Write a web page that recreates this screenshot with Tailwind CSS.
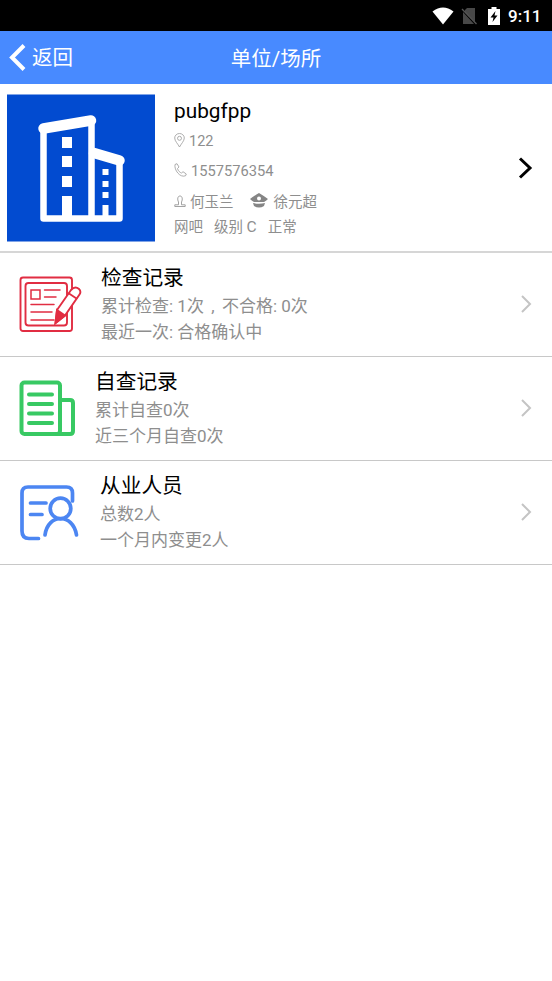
<!DOCTYPE html>
<html lang="zh-CN">
<head>
<meta charset="utf-8">
<title>单位/场所</title>
<script src="https://cdn.jsdelivr.net/npm/@tailwindcss/browser@4"></script>
</head>
<body class="w-[552px] h-[981px] bg-white overflow-hidden font-[Roboto,'Noto_Sans_CJK_SC',sans-serif] text-[#8e8e8e] whitespace-nowrap">
<div class="h-[31px] bg-black flex items-center justify-end pr-[10px] text-white">
  <svg class="w-[22px] h-[18px] mr-[7px]" viewBox="0 0 22 18"><path d="M.5 4.500Q11-3.500 21.500 4.500L11 17.500Z" fill="#fff"/></svg>
  <svg class="w-[17px] h-[18px] mr-[10px]" viewBox="0 0 17 18"><path d="M6 1H14V15L4 5V3ZM2 5L13 17H2Z" fill="#484848"/><path d="M1 2L15.500 17" stroke="#555" stroke-width="1.300"/></svg>
  <svg class="w-[12px] h-[18px] mr-[8px]" viewBox="0 0 12 18"><path d="M0 2H3.500V0H8.500V2H12V18H0Z" fill="#fff"/><path d="M7.500 4L2.500 10.500H5.500L4.500 15L9.500 8.500H6.500Z" fill="#000"/></svg>
  <span class="text-[17px] leading-[30px] pt-px font-medium w-[34px]">9:11</span>
</div>
<header class="h-[53px] bg-[#488aff] text-white text-[20.5px] leading-[53px] grid grid-cols-3">
  <div class="flex items-center pl-[9px]">
    <svg class="w-[17px] h-[27px] mr-[6px] mb-[2px]" viewBox="0 0 17 27" fill="none" stroke="#fff" stroke-width="4"><path d="M15 1.500L3 13.500L15 25.500"/></svg>
    <span class="pt-px">返回</span>
  </div>
  <h1 class="text-center pt-[3px] leading-[50px]">单位/场所</h1>
</header>
<main>
<section class="h-[169px] border-b-2 border-[#d6d6d6] flex pl-[7px] pt-[10px]">
  <svg class="w-[148px] h-[148px] mr-[19px]" viewBox="0 0 148 148"><path fill="#024bd0" d="M0 .5H148V147.500H0Z"/>
    <g fill="none" stroke="#fff" stroke-linecap="round" stroke-linejoin="round"><path d="M36.500 36V124.500H112.500V68M84.500 28V124" stroke-width="6.500"/><path d="M36.500 34.500L84 26.500M87 59L112.500 66.500" stroke-width="10.500"/></g>
    <path fill="#fff" d="M55 43H65V54H55ZM55 62H65V73H55ZM55 82H65V93H55ZM55 102H65V124H55ZM95.500 75H101.500V81H95.500ZM95.500 87H101.500V93H95.500ZM95.500 98H101.500V104H95.500ZM95.500 111H101.500V124H95.500Z"/>
  </svg>
  <div class="flex-1 text-[14.500px]">
    <h2 class="text-black text-[20.800px] leading-[34px] h-[35px]">pubgfpp</h2>
    <p class="h-[25px] leading-[25px] flex items-center"><svg class="w-[11px] h-[15px] mr-[4px] mb-[3px]" viewBox="0 0 11 15" fill="none" stroke="#999" stroke-width=".8"><path d="M5.500 14C4 11 .7 8 .7 5A4.800 4.500 0 0 1 10.300 5C10.300 8 7 11 5.500 14Z"/><circle cx="5.500" cy="5.300" r="2"/></svg>122</p>
    <p class="h-[34px] leading-[33px] flex items-center text-[14.700px]"><svg class="w-[13px] h-[14px] mr-[4px] mb-[3px]" viewBox="0 0 13 14" fill="none" stroke="#999" stroke-width=".8"><path d="M1 1.500L3 .7L5 4L3.500 5.500C4 8 6 9.500 7.500 10L9 8.700L12.300 11L11.500 12.800C6 15 0 7 1 1.500Z"/></svg>1557576354</p>
    <p class="h-[29px] leading-[29px] flex items-center"><svg class="w-[12px] h-[13px] mr-[4px] mb-[3px]" viewBox="0 0 12 13" fill="none" stroke="#999" stroke-width=".9"><path d="M.8 11.500H11.200V9.800H7.500V7C8.800 4.500 8.500 1 6 1S3.200 4.500 4.500 7V9.800H.8Z"/></svg>何玉兰<svg class="w-[18px] h-[15px] ml-[16px] mr-[6px] mb-[4px]" viewBox="0 0 18 15"><path fill="#858585" d="M0 6Q4 3 9 0Q14 3 18 6Q16 8 14 9H4Q2 8 0 6ZM3 10Q9 11.500 15 10L14 13Q9 16 4 13Z"/><circle cx="9" cy="5.500" r="2" fill="#fff"/></svg>徐元超</p>
    <p class="h-[21px] leading-[21px] flex"><span class="mr-[11px]">网吧</span><span class="mr-[11px]">级别 <span class="text-[15.500px]">C</span></span><span>正常</span></p>
  </div>
  <svg class="w-[15px] h-[24px] mt-[62px] mr-[19px]" viewBox="0 0 15 24" fill="none" stroke="#000" stroke-width="3"><path d="M2 2.500L12 12L2 21.500"/></svg>
</section>
<section class="h-[104px] border-b border-[#c8c8c8] flex pl-[19px]">
  <svg class="w-[63px] h-[58px] mt-[22px] mr-[19px]" viewBox="0 0 63 58" fill="none" stroke="#e12d42" stroke-width="1.900" stroke-linecap="round"><rect x="1.500" y="2.500" width="51.500" height="53.500" rx="2.500"/><rect x="6.500" y="8" width="41.500" height="42.500" rx="3"/><path d="M12 15H21V24H12ZM25.500 15H41M25.500 22H37M12 29.500H35M12 37H33M12 45H35" stroke-width="1.500"/><path d="M38 35L52 15Q56 10.500 60 14Q62.500 16.500 60.500 19.500L46 40.500L36.500 48Z" fill="#fff"/><path d="M38 35L46 40.500L36.500 48Z" fill="#e12d42"/><path d="M50 18.500L57.500 23.500"/></svg>
  <div class="flex-1 text-[17px] leading-[26px] pt-[9px]"><h2 class="text-black text-[20.700px] leading-[32px] h-[31px]">检查记录</h2><p>累计检查: 1次<span class="inline-block w-[18px] text-center">,</span>不合格: 0次</p><p>最近一次: 合格确认中</p></div>
  <svg class="w-[12px] h-[20px] mt-[41px] mr-[20px]" viewBox="0 0 12 20" fill="none" stroke="#c4c4c4" stroke-width="2"><path d="M2 2L10 10L2 18"/></svg>
</section>
<section class="h-[104px] border-b border-[#c8c8c8] flex pl-[19px]">
  <svg class="w-[57px] h-[58px] mt-[22px] mr-[19px]" viewBox="0 0 57 58" fill="none" stroke="#38c963" stroke-width="4" stroke-linecap="round"><rect x="2.500" y="3.500" width="38.500" height="51.500" rx="3"/><path d="M41 21H51Q54 21 54 24V52Q54 55 51 55H38M10 15.500H33M10 25H33M10 34.500H33M10 44H33"/></svg>
  <div class="flex-1 text-[17px] leading-[26px] pt-[9px]"><h2 class="text-black text-[20.700px] leading-[32px] h-[31px]">自查记录</h2><p>累计自查0次</p><p>近三个月自查0次</p></div>
  <svg class="w-[12px] h-[20px] mt-[41px] mr-[20px]" viewBox="0 0 12 20" fill="none" stroke="#c4c4c4" stroke-width="2"><path d="M2 2L10 10L2 18"/></svg>
</section>
<section class="h-[104px] border-b border-[#c8c8c8] flex pl-[19px]">
  <svg class="w-[61px] h-[60px] mt-[22px] mr-[20px]" viewBox="0 0 61 60" fill="none" stroke="#4c86f2" stroke-width="3.700" stroke-linecap="round"><path d="M53.500 18V10Q53.500 4 47.500 4H9Q3 4 3 10V48Q3 55.500 10 55.500H19.500M11.500 20H27M11.500 31.500H23"/><circle cx="41.500" cy="25.500" r="10.300"/><path d="M26 52C29 30 54 30 57.500 52"/></svg>
  <div class="flex-1 text-[17px] leading-[26px] pt-[9px]"><h2 class="text-black text-[20.700px] leading-[32px] h-[31px]">从业人员</h2><p>总数2人</p><p>一个月内变更2人</p></div>
  <svg class="w-[12px] h-[20px] mt-[41px] mr-[20px]" viewBox="0 0 12 20" fill="none" stroke="#c4c4c4" stroke-width="2"><path d="M2 2L10 10L2 18"/></svg>
</section>
</main>
</body>
</html>
